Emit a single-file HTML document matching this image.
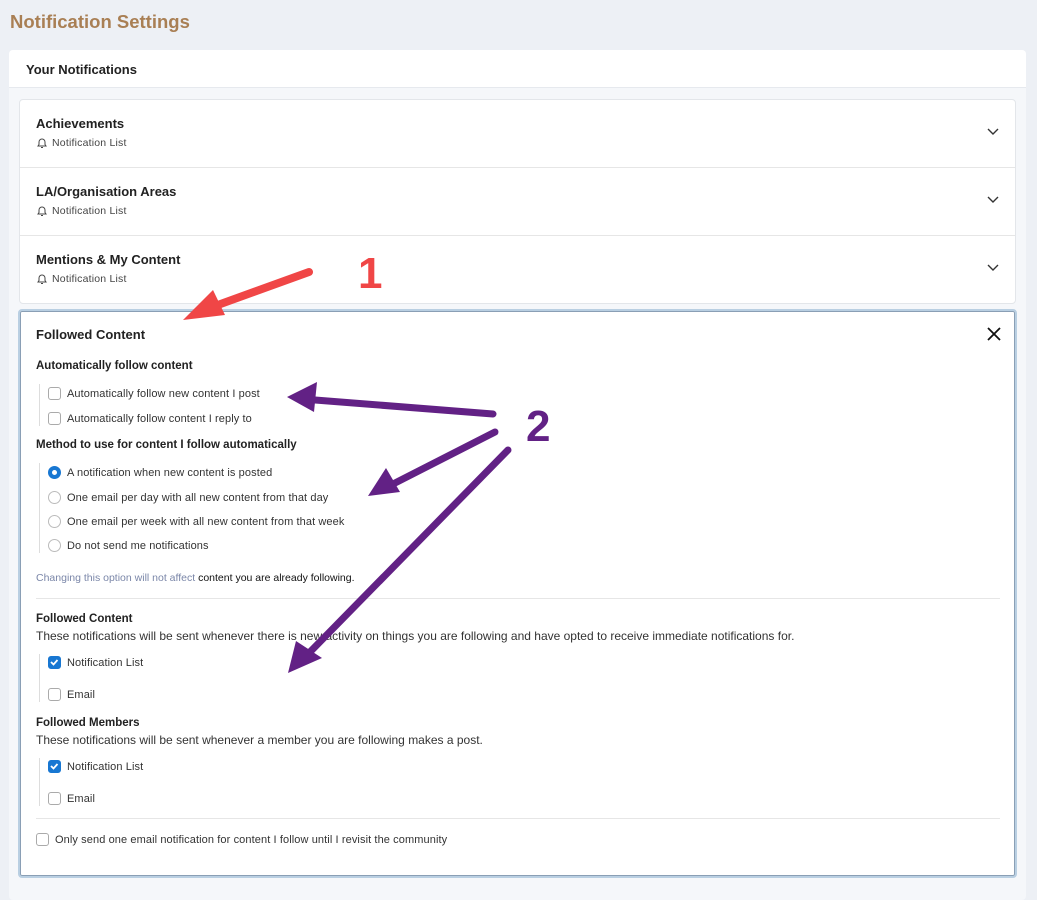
<!DOCTYPE html>
<html><head><meta charset="utf-8"><style>
*{box-sizing:border-box;margin:0;padding:0}
body{width:1037px;height:887px;background:#edf0f5;font-family:"Liberation Sans",sans-serif;color:#222;position:relative;overflow:hidden}
.a{position:absolute;white-space:nowrap}
.h1{left:10px;top:11px;font-size:18.5px;font-weight:bold;color:#a97f54}
.card{position:absolute;left:9px;top:50px;width:1017px;height:850px;background:#f5f7fa;border-radius:4px}
.ch{position:absolute;left:0;top:0;width:100%;height:38px;background:#fff;border-bottom:1px solid #e6e9ee;border-radius:4px 4px 0 0}
.list{position:absolute;left:19px;top:99px;width:997px;height:205px;background:#fff;border:1px solid #e3e6ea;border-radius:4px}
.row{position:absolute;left:0;width:100%;height:68px;border-bottom:1px solid #e6e6e6}
.t{font-size:13px;font-weight:bold;color:#222}
.s{font-size:10.5px;color:#444;letter-spacing:0.2px}
.exp{position:absolute;left:18px;top:309px;width:999px;height:569px;background:#fff;border:2px solid #b9cfe2;border-radius:4px;box-shadow:inset 0 0 0 1px #8a9fb5}
.cb{position:absolute;width:13px;height:13px;border:1px solid #aaa;border-radius:3px;background:#fff}
.cb.on{background:#1877d2;border-color:#1877d2}
.rd{position:absolute;width:13px;height:13px;border:1px solid #bbb;border-radius:50%;background:#fff}
.rd.on{border:4px solid #1877d2}
.lbl{font-size:11px;color:#333;letter-spacing:0.1px;margin-top:1px}
.vl{position:absolute;left:39px;width:1px;background:#ddd}
.hr{position:absolute;left:36px;width:964px;height:1px;background:#e6e6e6}
</style></head><body>
<div class="a h1">Notification Settings</div>
<div class="card"><div class="ch"><div class="a t" style="left:17px;top:12px">Your Notifications</div></div></div>
<div class="list">
 <div class="row" style="top:0"></div><div class="row" style="top:68px"></div><div class="row" style="top:136px;border:0"></div>
</div>
<div class="a t" style="left:36px;top:116px">Achievements</div>
<div class="a t" style="left:36px;top:184px">LA/Organisation Areas</div>
<div class="a t" style="left:36px;top:252px">Mentions &amp; My Content</div>
<svg class="a" style="left:37px;top:137px" width="10" height="150"><g fill="none" stroke="#444" stroke-width="1"><path id="b" d="M2 7.5V5a3 3 0 0 1 6 0v2.5l1 1.5H1z M4 10.5h2"/><use href="#b" y="68"/><use href="#b" y="136"/></g></svg>
<div class="a s" style="left:52px;top:137px">Notification List</div>
<div class="a s" style="left:52px;top:205px">Notification List</div>
<div class="a s" style="left:52px;top:273px">Notification List</div>
<svg class="a" style="left:986px;top:127px" width="14" height="150"><g fill="none" stroke="#333" stroke-width="1.4"><path d="M2 2l5 5 5-5"/><path d="M2 70l5 5 5-5"/><path d="M2 138l5 5 5-5"/></g></svg>
<div class="exp"></div>
<svg class="a" style="left:987px;top:327px" width="14" height="14"><path d="M1 1l12 12M13 1L1 13" stroke="#111" stroke-width="1.8"/></svg>
<div class="a t" style="left:36px;top:327px">Followed Content</div>
<div class="a t" style="left:36px;top:360px;font-size:11.5px">Automatically follow content</div>
<div class="vl" style="top:384px;height:42px"></div>
<div class="cb" style="left:48px;top:387px"></div><div class="a lbl" style="left:67px;top:387px">Automatically follow new content I post</div>
<div class="cb" style="left:48px;top:412px"></div><div class="a lbl" style="left:67px;top:412px">Automatically follow content I reply to</div>
<div class="a t" style="left:36px;top:439px;font-size:11.5px">Method to use for content I follow automatically</div>
<div class="vl" style="top:463px;height:90px"></div>
<div class="rd on" style="left:48px;top:466px"></div><div class="a lbl" style="left:67px;top:466px">A notification when new content is posted</div>
<div class="rd" style="left:48px;top:491px"></div><div class="a lbl" style="left:67px;top:491px">One email per day with all new content from that day</div>
<div class="rd" style="left:48px;top:515px"></div><div class="a lbl" style="left:67px;top:515px">One email per week with all new content from that week</div>
<div class="rd" style="left:48px;top:539px"></div><div class="a lbl" style="left:67px;top:539px">Do not send me notifications</div>
<div class="a" style="left:36px;top:572px;font-size:10.5px;color:#7a86a8">Changing this option will not affect <span style="color:#111">content you are already following.</span></div>
<div class="hr" style="top:598px"></div>
<div class="a t" style="left:36px;top:613px;font-size:11.5px">Followed Content</div>
<div class="a" style="left:36px;top:629px;font-size:12px;color:#333">These notifications will be sent whenever there is new activity on things you are following and have opted to receive immediate notifications for.</div>
<div class="vl" style="top:654px;height:48px"></div>
<div class="cb on" style="left:48px;top:656px"></div><div class="a lbl" style="left:67px;top:656px">Notification List</div>
<div class="cb" style="left:48px;top:688px"></div><div class="a lbl" style="left:67px;top:688px">Email</div>
<div class="a t" style="left:36px;top:717px;font-size:11.5px">Followed Members</div>
<div class="a" style="left:36px;top:733px;font-size:12px;color:#333">These notifications will be sent whenever a member you are following makes a post.</div>
<div class="vl" style="top:758px;height:48px"></div>
<div class="cb on" style="left:48px;top:760px"></div><div class="a lbl" style="left:67px;top:760px">Notification List</div>
<div class="cb" style="left:48px;top:792px"></div><div class="a lbl" style="left:67px;top:792px">Email</div>
<div class="hr" style="top:818px"></div>
<div class="cb" style="left:36px;top:833px"></div><div class="a lbl" style="left:55px;top:833px">Only send one email notification for content I follow until I revisit the community</div>
<svg class="a" style="left:0;top:0" width="1037" height="887">
<g fill="none" stroke="#fff" stroke-width="1.8"><path d="M51 662l2.5 2.5 4-4.5"/><path d="M51 766l2.5 2.5 4-4.5"/></g>
<path d="M309 272L215 306" stroke="#f04646" stroke-width="8" stroke-linecap="round"/>
<path d="M183 320l30-30 12 25z" fill="#f04646"/>
<g stroke="#622185" stroke-width="7" stroke-linecap="round" fill="none"><path d="M493 414L315 400"/><path d="M495 432L395 483"/><path d="M508 450L310 652"/></g>
<g fill="#622185"><path d="M287 397l30-15-3 30z"/><path d="M368 496l18-28 14 24z"/><path d="M288 673l8-32 26 17z"/></g>
<text x="358" y="288" font-family="Liberation Sans" font-weight="bold" font-size="44" fill="#f04646">1</text>
<text x="526" y="441" font-family="Liberation Sans" font-weight="bold" font-size="44" fill="#622185">2</text>
</svg>
</body></html>
